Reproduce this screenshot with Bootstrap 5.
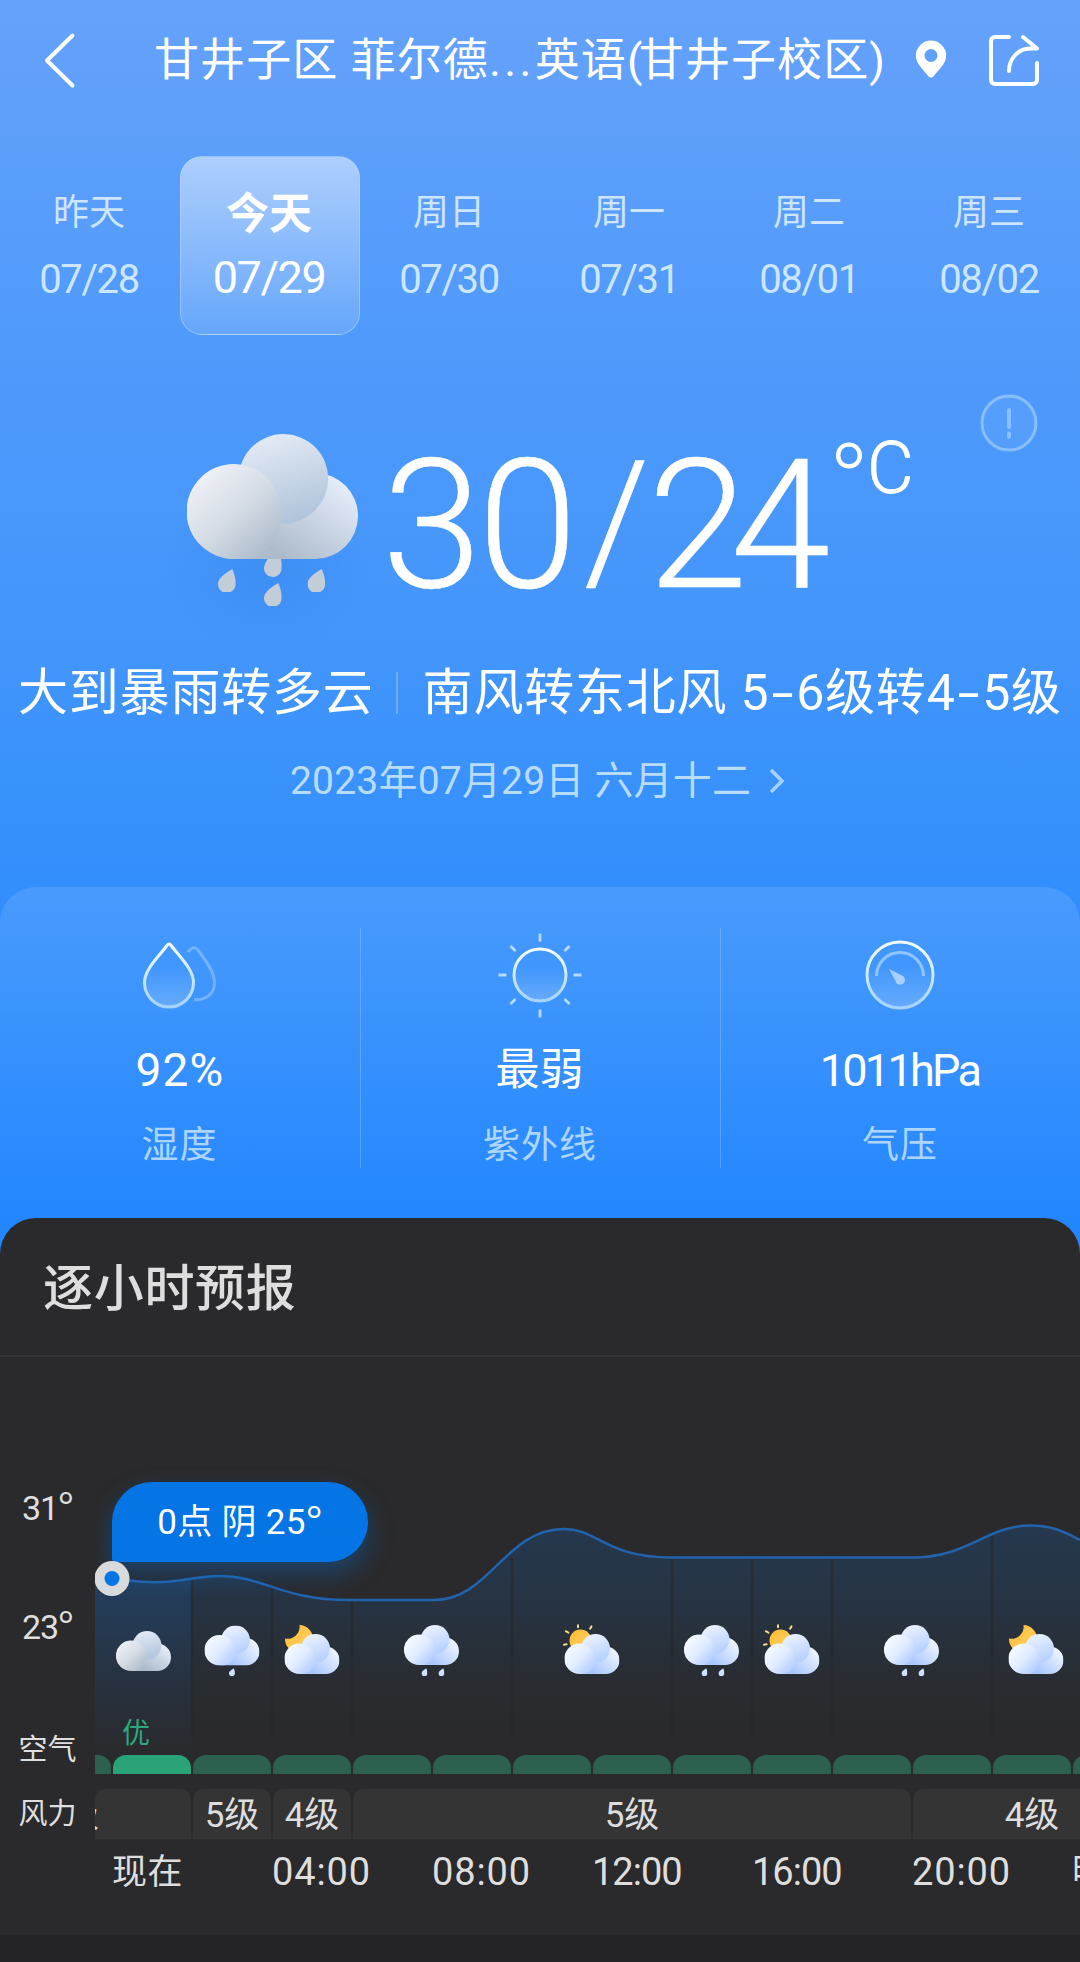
<!DOCTYPE html>
<html lang="zh-CN">

<head>
    <meta charset="UTF-8">
    <meta name="viewport" content="width=device-width, initial-scale=1.0">
    <title>天气预报</title>
    <link href="https://cdn.jsdelivr.net/npm/bootstrap@5.3.0/dist/css/bootstrap.min.css" rel="stylesheet">
    <style>
        body {
            width: 1080px;
            height: 1962px;
            overflow: hidden;
            color: #fff;
            background: #242426;
            font-family: Roboto, "Noto Sans CJK SC", sans-serif;
        }
        svg { display: block; flex: none; }
        .deg { font-family: "Open Sans", sans-serif; font-size: 1.12em; line-height: 1; }
        .sky {
            height: 1260px;
            background: linear-gradient(#65a2fb 0, #5a9efb 180px, #4f9afb 350px, #4496fb 620px, #338ffc 880px, #2286ff 1225px);
        }
        /* 顶部标题 */
        .topbar { height: 156px; padding: 30px 36px 0 41px; }
        .topbar-title { font-size: 45px; line-height: 62px; margin-left: 77px; width: 735px; white-space: nowrap; letter-spacing: 1.1px; }
        .title-dots { letter-spacing: 3.4px; }
        .title-paren { letter-spacing: -3.6px; }
        .pin-icon { margin: 9px 0 0 26px; }
        .share-icon { margin: 3px 0 0 40px; }
        /* 日期切换 */
        .day-item { width: 180px; height: 179px; padding-top: 32px; text-align: center; color: rgba(227, 244, 255, .85); border: 1px solid transparent; }
        .day-name { font-size: 36px; line-height: 48px; margin-left: -2px; }
        .day-date { font-size: 40px; line-height: 48px; margin: 19px 0 0 -2px; letter-spacing: -1.4px; }
        .day-item.is-today {
            color: #fff;
            border-radius: 22px;
            border-color: rgba(190, 220, 255, .5);
            background: linear-gradient(rgba(255, 255, 255, .5), rgba(255, 255, 255, .12));
        }
        .is-today .day-name { font-size: 43px; font-weight: 700; padding-top: 1px; }
        .is-today .day-date { font-size: 45px; margin-top: 16px; }
        /* 当前天气 */
        .now-row { height: 313px; padding-left: 161px; }
        .now-icon { margin-top: 74px; }
        .now-temp { font-size: 180px; line-height: 180px; font-weight: 300; letter-spacing: -4px; margin: 101px 0 0 -9px; width: 447px; height: 180px; white-space: nowrap; -webkit-text-stroke: .5px #fff; }
        .temp-slash { font-size: 166px; line-height: 1; vertical-align: 9px; margin: 0 2px 0 10px; }
        .temp-low { letter-spacing: -17px; }
        .now-unit { font-size: 72px; line-height: 60px; font-weight: 300; margin-top: 104px; width: 150px; white-space: nowrap; -webkit-text-stroke: .8px #fff; }
        .now-unit .deg { font-size: 84px; line-height: 50px; margin: 0 0 0 2px; vertical-align: -12px; }
        .info-icon { margin-top: 58px; }
        .cond-row { height: 90px; font-size: 50px; line-height: 92px; padding-left: 18px; white-space: nowrap; letter-spacing: .8px; }
        .cond-split { width: 2px; height: 42px; background: rgba(255, 255, 255, .25); margin: 0 25px 0 22px; }
        .wind-dash { display: inline-block; transform: scaleX(1.6); margin: 0 6px; }
        .lunar-row { height: 60px; margin-top: 13px; font-size: 39px; line-height: 62px; color: #b9dcfd; white-space: nowrap; padding-left: 290px; letter-spacing: .2px; }
        /* 指标 */
        .metric-panel {
            height: 340px;
            margin-top: 76px;
            border-radius: 36px 36px 0 0;
            background: linear-gradient(rgba(255, 255, 255, .11), rgba(255, 255, 255, 0));
        }
        .metric-item { width: 360px; height: 240px; margin-top: 41px; padding-right: 2px; }
        .metric-item + .metric-item { border-left: 1px solid rgba(255, 255, 255, .2); }
        .metric-drop { margin-right: 8px; }
        .metric-value { font-size: 44px; line-height: 57px; margin-top: 20px; }
        .metric-value.is-percent { font-size: 46px; letter-spacing: 1.2px; padding-left: 2px; }
        .metric-value.is-pressure { font-size: 45px; letter-spacing: -2.7px; }
        .metric-label { font-size: 37px; line-height: 48px; margin-top: 23px; padding-left: 1px; color: #acd5ff; letter-spacing: 1px; }
        /* 逐小时预报 */
        .hourly {
            height: 717px;
            margin-top: -42px;
            position: relative;
            border-radius: 36px 36px 0 0;
            color: #dedede;
            background: #2a2a2c;
        }
        .hourly-title { height: 139px; padding-left: 43px; font-size: 50px; line-height: 142px; font-weight: 500; letter-spacing: .7px; border-bottom: 2px solid #363638; }
        .axis { width: 95px; font-size: 34px; line-height: 40px; letter-spacing: -1.2px; }
        .axis-zh { font-size: 29px; letter-spacing: 0; }
        .plot { width: 985px; overflow: hidden; }
        .chart-stack { display: grid; height: 398px; }
        .chart-stack > * { grid-area: 1 / 1; }
        .icon-row { padding-top: 265px; }
        .air-label { font-size: 28px; line-height: 36px; color: #2fa77f; align-self: start; margin: 359px 0 0 27px; }
        .tip {
            width: 256px;
            height: 80px;
            margin: 125px 0 0 17px;
            border-radius: 40px 40px 40px 4px;
            font-size: 35px;
            line-height: 82px;
            text-align: center;
            color: #fff;
            letter-spacing: .3px;
            background: #0575e6;
            box-shadow: 0 12px 26px rgba(5, 117, 230, .35);
        }
        .air-bar { width: 78px; height: 19px; margin-right: 2px; flex: none; border-radius: 13px 13px 0 0; background: #2c604f; }
        .air-bar.is-now { background: #2aa379; }
        .wind-row { margin-top: 15px; }
        .wind-item { height: 50px; margin-right: 2px; flex: none; font-size: 35px; line-height: 54px; text-align: center; white-space: nowrap; border-radius: 10px 10px 0 0; background: #343435; }
        .wind-item span { margin-left: -31px; }
        .time-row { margin-top: 9px; padding-left: 17px; }
        .time-item { width: 160px; flex: none; font-size: 38px; line-height: 48px; letter-spacing: .9px; white-space: nowrap; }
        .time-item.is-word { font-size: 35px; line-height: 50px; letter-spacing: .5px; }
        .time-item.is-narrow { letter-spacing: -1px; }
    </style>
</head>

<body>
    <!-- 图标定义 -->
    <svg width="0" height="0" class="position-absolute">
        <defs>
            <linearGradient id="gLeft" x1=".1" y1=".1" x2=".85" y2=".95"><stop offset="0" stop-color="#f0f2f6"/><stop offset=".5" stop-color="#d6dde6"/><stop offset="1" stop-color="#adbbcb"/></linearGradient>
            <linearGradient id="gTop" x1=".3" y1="0" x2=".6" y2="1"><stop offset="0" stop-color="#e4ebf6"/><stop offset="1" stop-color="#afc3d9"/></linearGradient>
            <linearGradient id="gRight" gradientUnits="userSpaceOnUse" x1="155" y1="45" x2="100" y2="125"><stop offset="0" stop-color="#e6eefb"/><stop offset="1" stop-color="#adbbcb"/></linearGradient>
            <linearGradient id="bLeft" x1=".1" y1=".2" x2=".9" y2=".9"><stop offset="0" stop-color="#f7faff"/><stop offset=".5" stop-color="#dfebff"/><stop offset="1" stop-color="#b2cdff"/></linearGradient>
            <linearGradient id="bTop" x1=".2" y1="0" x2=".6" y2="1"><stop offset="0" stop-color="#eef4ff"/><stop offset="1" stop-color="#b5d0fe"/></linearGradient>
            <linearGradient id="bRight" gradientUnits="userSpaceOnUse" x1="165" y1="50" x2="95" y2="125"><stop offset="0" stop-color="#f2f7ff"/><stop offset="1" stop-color="#a8c7ff"/></linearGradient>
            <linearGradient id="sunFill" x1="0" y1="0" x2="1" y2="1"><stop offset="0" stop-color="#ffb92c"/><stop offset="1" stop-color="#ffd873"/></linearGradient>
            <linearGradient id="ring" x1="0" y1="0" x2="0" y2="1"><stop offset="0" stop-color="#f4fdff"/><stop offset="1" stop-color="#a6d3ff"/></linearGradient>
            <linearGradient id="ringFill" x1="0" y1="0" x2="0" y2="1"><stop offset=".35" stop-color="#fff" stop-opacity="0"/><stop offset="1" stop-color="#fff" stop-opacity=".22"/></linearGradient>
            <radialGradient id="haze"><stop offset="0" stop-color="#2d7fe8" stop-opacity=".35"/><stop offset="1" stop-color="#2d7fe8" stop-opacity="0"/></radialGradient>

            <symbol id="cloudGray" viewBox="0 0 171 125" preserveAspectRatio="none">
                <path d="M47 50H128V39A43 43 0 0 1 128 125H47z" fill="url(#gRight)"/>
                <circle cx="96.500" cy="44.700" r="44.700" fill="url(#gTop)"/>
                <path d="M47 30A47 47 0 0 0 47 125H62C88 117 96 96 94 74A47 47 0 0 0 47 30z" fill="url(#gLeft)"/>
            </symbol>
            <symbol id="cloudBlue" viewBox="0 0 171 125" preserveAspectRatio="none">
                <path d="M47 50H128V39A43 43 0 0 1 128 125H47z" fill="url(#bRight)"/>
                <circle cx="96.500" cy="44.700" r="44.700" fill="url(#bTop)"/>
                <path d="M47 30A47 47 0 0 0 47 125H62C88 117 96 96 94 74A47 47 0 0 0 47 30z" fill="url(#bLeft)"/>
            </symbol>
            <symbol id="drop" viewBox="0 0 18 24">
                <path d="M14.300 1Q18 10 17.500 15A8.800 8.800 0 1 1 1.300 11.500Q4 7 14.300 1z"/>
            </symbol>

            <!-- 小时图标 60x56 -->
            <symbol id="overcast" viewBox="0 0 60 56"><use href="#cloudGray" x="2" y="9" width="55" height="40"/></symbol>
            <symbol id="lightRain" viewBox="0 0 60 56"><use href="#cloudBlue" x="2.500" y="3.500" width="55" height="40"/><use href="#drop" x="27" y="46" width="6" height="8" fill="#cfe0ff"/></symbol>
            <symbol id="rain" viewBox="0 0 60 56"><use href="#cloudBlue" x="2" y="3" width="55" height="40"/><use href="#drop" x="19.500" y="46" width="6" height="8" fill="#cfe0ff"/><use href="#drop" x="36.500" y="46" width="6" height="8" fill="#cfe0ff"/></symbol>
            <symbol id="cloudNight" viewBox="0 0 60 56"><path d="M17.500 3A14 14 0 1 1 3 16.500A12 12 0 0 0 17.500 3z" fill="url(#sunFill)"/><use href="#cloudBlue" x="2.500" y="12" width="55" height="40"/></symbol>
            <symbol id="cloudDay" viewBox="0 0 60 56">
                <circle cx="18.500" cy="18.500" r="11" fill="url(#sunFill)"/>
                <path d="M16 3.200v2M29.500 4.400l-1.400 2.200M3.800 9.200l2.600 1.500M2 22.700l2.600-.4" stroke="#f6d88b" stroke-width="2" stroke-linecap="round"/>
                <use href="#cloudBlue" x="2.500" y="12" width="55" height="40"/>
            </symbol>
        </defs>
    </svg>

    <div class="sky">
        <!-- 标题栏 -->
        <header class="topbar d-flex align-items-start">
            <svg width="36" height="60" viewBox="0 0 36 60" fill="none" stroke="#fff" stroke-width="4" stroke-linecap="round" stroke-linejoin="round"><path d="M31.500 5.500L6 30.500L31.500 55.500"/></svg>
            <div class="topbar-title">甘井子区 菲尔德<span class="title-dots">...</span>英语<span class="title-paren">(</span>甘井子校区)</div>
            <svg class="pin-icon" width="32" height="40" viewBox="0 0 32 40"><path fill="#fff" fill-rule="evenodd" d="M16 1.500A15.200 15.200 0 0 0 .8 16.500C.8 25 9 31 13.500 37.500Q16 39.500 18.500 37.500C23 31 31.200 25 31.200 16.500A15.200 15.200 0 0 0 16 1.500zM16 10a6.500 6.500 0 1 1 0 13a6.500 6.500 0 1 1 0-13z"/></svg>
            <svg class="share-icon" width="54" height="54" viewBox="0 0 54 54" fill="none" stroke="#fff" stroke-width="4" stroke-linecap="round" stroke-linejoin="round"><path d="M22 4H8.500Q4 4 4 8.500V46.500Q4 51 8.500 51H45.500Q50 51 50 46.500V30"/><path d="M36 4L50 15.500H43C31 15.500 22 26 22 38"/></svg>
        </header>

        <!-- 日期 -->
        <nav class="d-flex">
            <div class="day-item"><div class="day-name">昨天</div><div class="day-date">07/28</div></div>
            <div class="day-item is-today"><div class="day-name">今天</div><div class="day-date">07/29</div></div>
            <div class="day-item"><div class="day-name">周日</div><div class="day-date">07/30</div></div>
            <div class="day-item"><div class="day-name">周一</div><div class="day-date">07/31</div></div>
            <div class="day-item"><div class="day-name">周二</div><div class="day-date">08/01</div></div>
            <div class="day-item"><div class="day-name">周三</div><div class="day-date">08/02</div></div>
        </nav>

        <!-- 当前天气 -->
        <div class="now-row d-flex align-items-start">
            <svg class="now-icon" width="230" height="240" viewBox="0 0 230 240">
                <ellipse cx="105" cy="160" rx="105" ry="80" fill="url(#haze)"/>
                <use href="#cloudGray" x="26" y="25" width="171" height="125"/>
                <g fill="#c3cdd8">
                    <use href="#drop" x="57" y="159" width="18" height="24"/>
                    <use href="#drop" x="146.500" y="159" width="18" height="24"/>
                    <use href="#drop" x="103" y="173" width="18" height="24"/>
                    <path d="M106.500 150H120Q121 154 120.500 160A8.800 8.800 0 1 1 104 155z"/>
                </g>
            </svg>
            <div class="now-temp">30<span class="temp-slash">/</span><span class="temp-low">24</span></div>
            <div class="now-unit"><span class="deg">°</span>C</div>
            <svg class="info-icon" width="60" height="60" viewBox="0 0 60 60" fill="none" stroke="#9ccafd" stroke-width="3" stroke-opacity=".75"><circle cx="30" cy="30" r="27" fill="#fff" fill-opacity=".05"/><path d="M30 17v17M30 40.500v3.500" stroke-width="4" stroke-linecap="round"/></svg>
        </div>
        <div class="cond-row d-flex align-items-center">
            <span>大到暴雨转多云</span><span class="cond-split"></span><span>南风转东北风 5<span class="wind-dash">-</span>6级转4<span class="wind-dash">-</span>5级</span>
        </div>
        <div class="lunar-row d-flex align-items-center">
            <span>2023年07月29日 六月十二</span>
            <svg class="ms-3" width="20" height="28" viewBox="0 0 20 28" fill="none" stroke="#a5d2fd" stroke-width="3.500"><path d="M4 3l11 11L4 25"/></svg>
        </div>

        <!-- 湿度 / 紫外线 / 气压 -->
        <div class="metric-panel d-flex text-center">
            <div class="metric-item d-flex flex-column align-items-center">
                <svg class="metric-drop" width="90" height="94" viewBox="0 0 90 94" fill="none" stroke-width="3">
                    <path d="M58 24Q63.500 17 67.500 21.500C72 28 84.500 42 84.500 55C84.500 66 75 73 64 71.500" stroke="#9fcbff" stroke-opacity=".55"/>
                    <path d="M37 17.500Q39 14.500 41.200 17.500C48 27 63.500 41 63.500 54.500A24.500 24.500 0 0 1 14.500 54.500C14.500 41 30 27 37 17.500z" fill="url(#ringFill)" stroke="url(#ring)"/>
                </svg>
                <div class="metric-value is-percent">92%</div>
                <div class="metric-label">湿度</div>
            </div>
            <div class="metric-item d-flex flex-column align-items-center">
                <svg width="90" height="94" viewBox="0 0 90 94" fill="none" stroke-width="3">
                    <circle cx="45" cy="47" r="26" fill="url(#ringFill)" stroke="url(#ring)"/>
                    <path d="M45 5.500v8M45 81.500v8M3.500 47h8M78.500 47h8M15.500 18l5 5M74.500 18l-5 5M15.500 76l5-5M74.500 76l-5-5" stroke="#b4dbff" stroke-width="2.800"/>
                </svg>
                <div class="metric-value">最弱</div>
                <div class="metric-label">紫外线</div>
            </div>
            <div class="metric-item d-flex flex-column align-items-center">
                <svg width="90" height="94" viewBox="0 0 90 94" fill="none" stroke-width="3">
                    <circle cx="45" cy="47" r="33" fill="url(#ringFill)" stroke="url(#ring)"/>
                    <path d="M21.500 48A23.500 23.500 0 0 1 68.500 48" stroke="#a5d1ff" stroke-opacity=".8"/>
                    <path d="M34 41L47 47.500A4.800 4.800 0 1 1 40.500 53z" fill="#a8d0ff"/>
                </svg>
                <div class="metric-value is-pressure">1011hPa</div>
                <div class="metric-label">气压</div>
            </div>
        </div>
    </div>

    <!-- 逐小时预报 -->
    <section class="hourly">
        <div class="hourly-title">逐小时预报</div>
        <div class="d-flex">
            <div class="axis text-center">
                <div style="margin-top: 129px">31<span class="deg">°</span></div>
                <div style="margin-top: 77px">23<span class="deg">°</span></div>
                <div class="axis-zh" style="margin-top: 83px">空气</div>
                <div class="axis-zh" style="margin-top: 24px">风力</div>
            </div>
            <div class="plot">
                <div class="chart-stack">
                    <!-- 温度曲线 -->
                    <svg width="985" height="398" viewBox="95 1357 985 398" fill="none">
                        <defs>
                            <linearGradient id="area" gradientUnits="userSpaceOnUse" x1="0" y1="1520" x2="0" y2="1742"><stop offset="0" stop-color="#1d4f86" stop-opacity=".4"/><stop offset=".45" stop-color="#22405f" stop-opacity=".38"/><stop offset="1" stop-color="#26303c" stop-opacity="0"/></linearGradient>
                            <linearGradient id="areaNow" gradientUnits="userSpaceOnUse" x1="0" y1="1575" x2="0" y2="1755"><stop offset="0" stop-color="#1c5291" stop-opacity=".32"/><stop offset="1" stop-color="#1c5291" stop-opacity=".02"/></linearGradient>
                        </defs>
                        <path fill="url(#area)" d="M95 1578C120 1580 130 1582.300 155 1582.300C182 1582.300 195 1576 220 1576C264 1576 280 1600 350 1600H434C490 1600 505 1529 564 1529C598 1529 605 1557.500 672 1557.500H912C970 1557.500 985 1525.500 1031 1525.500C1054 1525.500 1066 1533 1080 1540V1755H95z"/>
                        <path fill="url(#areaNow)" d="M95 1578C120 1580 130 1582.300 155 1582.300C170 1582.300 180 1580.500 191 1578.500V1755H95z"/>
                        <path stroke="#26282b" stroke-width="2.500" stroke-opacity=".65" d="M192 1580V1735M272 1588V1735M352 1601V1735M512 1558V1735M672 1559V1735M752 1559V1735M832 1559V1735M992 1536V1735"/>
                        <path stroke="#2163ad" stroke-width="2.500" d="M112 1578C126 1580 138 1582.300 155 1582.300C182 1582.300 195 1576 220 1576C264 1576 280 1600 350 1600H434C490 1600 505 1529 564 1529C598 1529 605 1557.500 672 1557.500H912C970 1557.500 985 1525.500 1031 1525.500C1054 1525.500 1066 1533 1080 1540"/>
                    </svg>
                    <div class="tip">0点 阴 25<span class="deg">°</span></div>
                    <svg width="985" height="398" viewBox="95 1357 985 398"><circle cx="112" cy="1578.500" r="17.500" fill="#d9dadb"/><circle cx="112" cy="1578.500" r="7.500" fill="#0575e6"/></svg>
                    <div class="icon-row d-flex" id="icon-row"></div>
                    <div class="air-label">优</div>
                </div>
                <div class="d-flex" id="air-row"></div>
                <div class="wind-row d-flex" id="wind-row"></div>
                <div class="time-row d-flex" id="time-row"></div>
            </div>
        </div>
    </section>

    <script>
        // 每小时宽 40px，数值为各段宽度
        const icons = [
            ['overcast', 97], ['lightRain', 80], ['cloudNight', 80], ['rain', 160], ['cloudDay', 160],
            ['rain', 80], ['cloudDay', 80], ['rain', 160], ['cloudNight', 88]
        ];
        const winds = [['级', 96], ['5级', 78], ['4级', 78], ['5级', 558], ['4级', 238]];
        const times = [['现在', 'is-word'], ['04:00', ''], ['08:00', ''], ['12:00', 'is-narrow'], ['16:00', 'is-narrow'], ['20:00', ''], ['明天', 'is-word']];

        document.getElementById('icon-row').innerHTML = icons.map(([name, width]) => `
            <div class="d-flex justify-content-center flex-shrink-0" style="width: ${width}px">
                <svg width="60" height="56"><use href="#${name}"/></svg>
            </div>`).join('');

        // 空气质量条
        let airHtml = '<div class="air-bar" style="width: 16px; border-top-left-radius: 0"></div>';
        for (let i = 0; i < 13; i++) {
            airHtml += `<div class="air-bar ${i === 0 ? 'is-now' : ''}"></div>`;
        }
        document.getElementById('air-row').innerHTML = airHtml;

        // 第一段从左侧滚出，只剩文字末尾
        document.getElementById('wind-row').innerHTML = winds.map(([text, width], i) =>
            i === 0
                ? `<div class="wind-item d-flex" style="width: ${width}px"><span>${text}</span></div>`
                : `<div class="wind-item" style="width: ${width}px">${text}</div>`
        ).join('');

        document.getElementById('time-row').innerHTML = times.map(([t, cls]) => `<div class="time-item ${cls}">${t}</div>`).join('');
    </script>
    <script src="https://cdn.jsdelivr.net/npm/bootstrap@5.3.0/dist/js/bootstrap.bundle.min.js"></script>
</body>

</html>
